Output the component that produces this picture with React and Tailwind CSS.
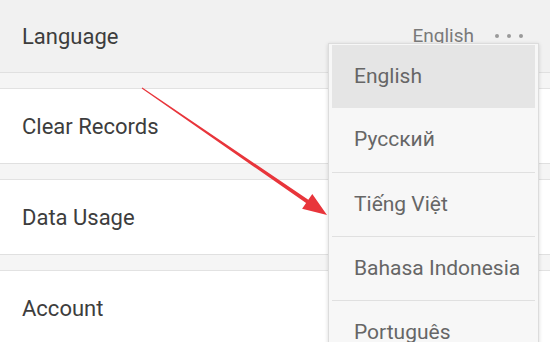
import React from "react";

function Row({ label, bg = "bg-white", h = "h-[75px]", children }) {
  return (
    <div className={`${h} ${bg} flex items-center justify-between pl-[22px] pr-[27px] border-b border-[#e0e0e0]`}>
      <span className="text-[22px] text-[#3d3d3d]">{label}</span>
      {children}
    </div>
  );
}

function Gap() {
  return <div className="h-[16px] bg-[#f5f5f5] border-b border-[#e2e2e2]" />;
}

export default function App() {
  const items = ["Русский", "Tiếng Việt", "Bahasa Indonesia", "Português"];
  return (
    <div
      className="relative w-[550px] h-[342px] overflow-hidden bg-white"
      style={{ fontFamily: "Roboto, 'Noto Sans', sans-serif" }}
    >
      <Row label="Language" bg="bg-[#f1f1f1]" h="h-[73px]">
        <div className="flex items-center">
          <span className="text-[19px] text-[#7a7a7a] mr-[21px]">English</span>
          <div className="flex gap-[8px]">
            <span className="w-[4px] h-[4px] rounded-full bg-[#9a9a9a]" />
            <span className="w-[4px] h-[4px] rounded-full bg-[#9a9a9a]" />
            <span className="w-[4px] h-[4px] rounded-full bg-[#9a9a9a]" />
          </div>
        </div>
      </Row>
      <Gap />
      <Row label="Clear Records" />
      <Gap />
      <Row label="Data Usage" />
      <Gap />
      <Row label="Account" />

      <div className="absolute left-[328px] top-[43px] w-[211px] bg-[#f7f7f7] border border-[#dcdcdc] shadow-[0_1px_4px_rgba(0,0,0,0.15)] px-[3px] pt-[1px]">
        <div className="h-[63px] bg-[#e5e5e5] flex items-center pl-[22px] text-[21px] text-[#666]">
          English
        </div>
        {items.map((t, i) => (
          <div
            key={t}
            className={`h-[64px] flex items-center pl-[22px] text-[21px] text-[#666] whitespace-nowrap ${i > 0 ? "border-t border-[#e0e0e0]" : ""}`}
          >
            {t}
          </div>
        ))}
      </div>

      <svg className="absolute left-0 top-0" width="550" height="342" viewBox="0 0 550 342">
        <polygon
          points="141.7,88.5 142.3,87.5 308.3,199.8 312.3,194 327,215 302.1,208.8 306.1,203.1"
          fill="#e8353b"
        />
      </svg>
    </div>
  );
}
